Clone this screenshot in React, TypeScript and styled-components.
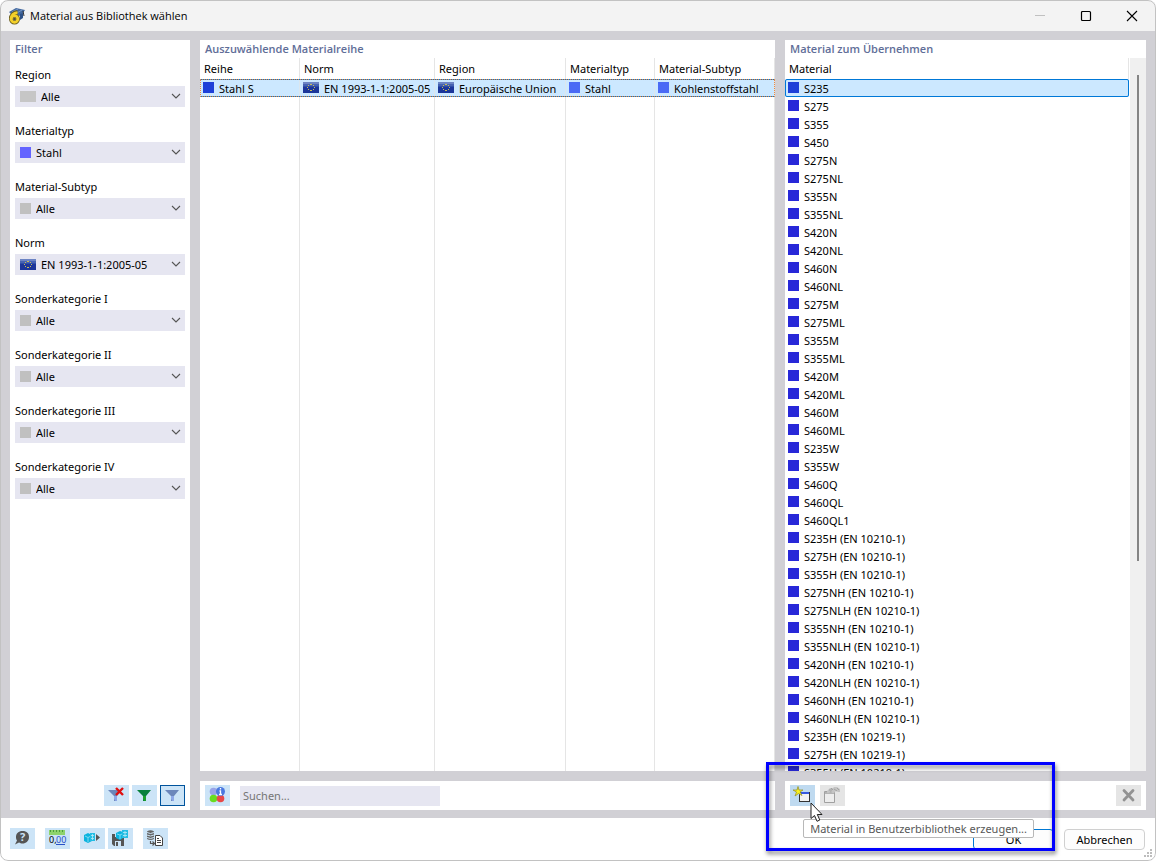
import React from "react";
import styled, { createGlobalStyle, css } from "styled-components";

const GlobalStyle = createGlobalStyle`
  * { box-sizing: border-box; }
  body { margin: 0; background: #fff; }
  body, button, input, select, table {
    font-family: "Noto Sans", "Open Sans", sans-serif;
    font-size: 11px;
    color: #000;
  }
`;

const Dialog = styled.main`
  position: relative;
  display: flex;
  flex-direction: column;
  height: 100vh;
  min-height: 600px;
  overflow: hidden;
  background: #d1d0d5;
  border-radius: 8px;
  &::after {
    content: "";
    position: absolute;
    inset: 0;
    border: 1px solid #c2c2c2;
    border-radius: 8px;
    pointer-events: none;
  }
`;

const TitleBar = styled.header`
  display: flex;
  align-items: center;
  flex: none;
  height: 31px;
  padding: 0 1px 0 8px;
  background: #f3f3f3;
`;

const Title = styled.h1`
  flex: 1;
  margin: 0;
  padding-left: 4px;
  font-family: "Open Sans", sans-serif;
  font-size: 11px;
  font-weight: 400;
`;

const WindowButton = styled.button`
  display: flex;
  align-items: center;
  justify-content: center;
  width: 46px;
  height: 31px;
  padding: 0;
  border: 0;
  background: none;
`;

const Body = styled.div`
  flex: 1;
  min-height: 0;
  display: grid;
  grid-template-columns: 180px minmax(0, 575fr) minmax(0, 361fr);
  grid-template-rows: minmax(0, 1fr);
  gap: 10px;
  padding: 9px 10px 8px;
`;

const Column = styled.section`
  display: flex;
  flex-direction: column;
  gap: 10px;
  min-height: 0;
`;

const Panel = styled.div`
  flex: 1;
  min-height: 0;
  display: flex;
  flex-direction: column;
  background: #fff;
`;

const PanelTitle = styled.h2`
  flex: none;
  height: 18px;
  margin: 0;
  padding-left: 5px;
  font-family: "Open Sans", sans-serif;
  font-size: 11px;
  line-height: 18px;
  font-weight: 600;
  color: #5f6e98;
`;

const Filters = styled.div`
  flex: 1;
  min-height: 0;
  display: flex;
  flex-direction: column;
  gap: 15px;
  padding: 8px 5px;
`;

const Field = styled.div`
  display: flex;
  flex-direction: column;
  gap: 2px;
`;

const FieldLabel = styled.label`
  height: 18px;
  line-height: 18px;
`;

const SelectBox = styled.div`
  position: relative;
  height: 21px;
`;

const Select = styled.select<{ $wide: boolean }>`
  appearance: none;
  display: block;
  width: 100%;
  height: 21px;
  padding: 0 20px 0 ${(p) => (p.$wide ? 26 : 21)}px;
  border: 0;
  border-radius: 0;
  background: #e6e6f1;
`;

const SelectMark = styled.span`
  position: absolute;
  left: 5px;
  top: 5px;
  display: flex;
  pointer-events: none;
`;

const SelectArrow = styled.svg`
  position: absolute;
  right: 4px;
  top: 7px;
  pointer-events: none;
`;

const Swatch = styled.span<{ $color: string; $wide?: boolean }>`
  flex: none;
  width: ${(p) => (p.$wide ? 16 : 11)}px;
  height: 11px;
  background: ${(p) => p.$color};
`;

const Toolbar = styled.div<{ $end?: boolean; $gap?: number }>`
  flex: none;
  display: flex;
  align-items: center;
  justify-content: ${(p) => (p.$end ? "flex-end" : "flex-start")};
  gap: ${(p) => p.$gap ?? 5}px;
  height: 29px;
  padding: 0 5px;
  background: #fff;
`;

const tones = { normal: "#cce4f7", hover: "#bfdaf0", disabled: "#e5e5e5" };

const ToolButton = styled.button<{ $tone?: keyof typeof tones; $active?: boolean; $pushed?: boolean }>`
  flex: none;
  display: block;
  width: 25px;
  height: 21px;
  padding: 0;
  border: 0;
  background: ${(p) => tones[p.$tone ?? "normal"]};
  ${(p) => p.$active && css`box-shadow: inset 0 0 0 1px #00539c;`}
  ${(p) => p.$pushed && css`margin-left: auto;`}
  svg { display: block; }
`;

const Search = styled.input`
  width: 200px;
  height: 20px;
  padding: 0 3px;
  border: 0;
  background: #e6e6f1;
  &::placeholder { color: #757575; opacity: 1; }
`;

const Table = styled.table`
  flex: 1;
  width: 100%;
  height: 100%;
  table-layout: fixed;
  border-collapse: separate;
  border-spacing: 0;
  th, td {
    padding: 0 4px;
    border-right: 1px solid #e5e5e5;
    text-align: left;
    font-weight: 400;
    white-space: nowrap;
  }
  th { height: 21px; }
`;

const TableArea = styled.div`
  flex: 1;
  min-height: 0;
`;

const SelectedRow = styled.tr`
  height: 18px;
  outline: 1px dotted #f0883c;
  outline-offset: -1px;
  td {
    padding: 0 3px;
    border-right: 0;
    background: #cce8ff;
    box-shadow: inset 0 1px #0078d7, inset 0 -1px #0078d7, inset -1px 0 #dbe6ee;
  }
`;

const Cell = styled.span`
  display: flex;
  align-items: flex-start;
  gap: 5px;
  height: 18px;
  padding-top: 3px;
  line-height: 14px;
`;

const ListArea = styled.div`
  flex: 1;
  min-height: 0;
  display: flex;
`;

const ListView = styled.div`
  flex: 1;
  min-width: 0;
  overflow: hidden;
`;

const List = styled(Table)`
  height: auto;
`;

const MaterialRow = styled.tr<{ $selected: boolean }>`
  height: 18px;
  td { padding: 0 3px; border-right: 0; }
  ${(p) => p.$selected && css`
    background: #cce8ff;
    outline: 1px solid #0078d7;
    outline-offset: -1px;
    border-radius: 2px;
  `}
`;

const ScrollTrack = styled.div`
  flex: none;
  width: 17px;
  padding: 17px 7px 0;
  border-left: 1px solid #fff;
  background: #f0f0f0;
`;

const ScrollThumb = styled.div`
  height: 70%;
  max-height: 486px;
  background: #858585;
`;

const Footer = styled.footer`
  flex: none;
  display: flex;
  align-items: flex-start;
  gap: 10px;
  height: 43px;
  padding: 10px 11px 0 10px;
  background: #fff;
`;

const FooterTools = styled.div`
  flex: 1;
  display: flex;
  gap: 10px;
`;

const ToolPair = styled.div`
  display: flex;
  gap: 3px;
`;

const PushButton = styled.button<{ $primary?: boolean }>`
  width: 81px;
  height: 21px;
  margin-top: 1px;
  padding: 0;
  border: 1px solid ${(p) => (p.$primary ? "#0078d4" : "#d0d0d0")};
  border-radius: 4px;
  background: #fdfdfd;
`;

const Grip = styled.svg`
  position: absolute;
  right: 3px;
  bottom: 3px;
`;

const Marker = styled.div`
  position: absolute;
  right: 101px;
  bottom: 10px;
  width: 289px;
  height: 89px;
  border: 3px solid #0000ff;
  filter: drop-shadow(1px 3px 2px rgba(0, 0, 0, 0.5));
  pointer-events: none;
`;

const Tooltip = styled.div`
  position: absolute;
  right: 122px;
  bottom: 23px;
  height: 19px;
  padding: 0 6px;
  border: 1px solid #b8b8b8;
  border-radius: 2px;
  background: #fff;
  color: #575757;
  line-height: 17px;
  white-space: nowrap;
`;

const Pointer = styled.svg`
  position: absolute;
  right: 332px;
  bottom: 38px;
`;

const Flag = () => (
  <svg width="16" height="11" viewBox="0 0 16 11" aria-hidden="true">
    <rect width="16" height="11" fill="#1c369a" />
    <rect width="16" height="2" fill="#6c84c4" />
    <rect y="2" width="16" height="2" fill="#4562b2" />
    <rect y="4" width="16" height="1" fill="#2e4ca6" />
    <path
      d="M7 2H9V3H7ZM5 3H6V4H5ZM10 3H11V4H10ZM4 5H5V6H4ZM11 5H12V6H11ZM5 7H6V8H5ZM10 7H11V8H10ZM7 8H9V9H7Z"
      fill="#c9bd58"
    />
  </svg>
);

const Mark = ({ kind }: { kind: string }) =>
  kind === "flag" ? <Flag /> : <Swatch $color={kind === "wide" ? "#c6c6c6" : kind} $wide={kind === "wide"} />;

const Funnel = ({ top, stem }: { top: string; stem: string }) => (
  <>
    <path d="M4 5H18L13 11V16H10V11Z" transform="translate(1)" fill={top} />
    <path d="M10 11H13V16H11.500L10 14Z" transform="translate(1)" fill={stem} />
  </>
);

const Icon = ({ children }: { children: React.ReactNode }) => (
  <svg width="25" height="21" viewBox="0 0 25 21" aria-hidden="true">{children}</svg>
);

const AppLogo = () => (
  <svg width="18" height="18" viewBox="0 0 18 18" aria-hidden="true">
    <path d="M1 5L8 1L17 3L13 9L4 8Z" fill="#44699f" />
    <path d="M4 5L10 2M7 7L14 3" stroke="#7899c6" />
    <path d="M12 7L15 6V11L12 13Z" fill="#2f5287" />
    <path d="M15 4L16 9" stroke="#333" />
    <path d="M9.500 5Q3 6 3 12" fill="none" stroke="#6b5f22" strokeWidth="4" />
    <circle cx="6.500" cy="12" r="3.500" fill="#f4e9a0" stroke="#6b5f22" strokeWidth="4" />
    <path d="M9.500 5.500Q3.500 6 3 12" fill="none" stroke="#f3d02a" strokeWidth="2.600" />
    <circle cx="6.500" cy="12" r="3.300" fill="none" stroke="#f3d02a" strokeWidth="2.800" />
    <circle cx="6.500" cy="12" r="1.500" fill="#5a5530" />
  </svg>
);

const filters = [
  { id: "region", label: "Region", value: "Alle", mark: "wide" },
  { id: "type", label: "Materialtyp", value: "Stahl", mark: "#6464ff" },
  { id: "subtype", label: "Material-Subtyp", value: "Alle", mark: "#c0c0c0" },
  { id: "norm", label: "Norm", value: "EN 1993-1-1:2005-05", mark: "flag" },
  { id: "cat1", label: "Sonderkategorie I", value: "Alle", mark: "#c0c0c0" },
  { id: "cat2", label: "Sonderkategorie II", value: "Alle", mark: "#c0c0c0" },
  { id: "cat3", label: "Sonderkategorie III", value: "Alle", mark: "#c0c0c0" },
  { id: "cat4", label: "Sonderkategorie IV", value: "Alle", mark: "#c0c0c0" },
];

const series = [
  { head: "Reihe", value: "Stahl S", mark: "#1e40d8", width: 100 },
  { head: "Norm", value: "EN 1993-1-1:2005-05", mark: "flag", width: 135 },
  { head: "Region", value: "Europäische Union", mark: "flag", width: 131 },
  { head: "Materialtyp", value: "Stahl", mark: "#4a6af5", width: 89 },
  { head: "Material-Subtyp", value: "Kohlenstoffstahl", mark: "#4a6af5", width: undefined },
];

const materials = [
  "S235", "S275", "S355", "S450", "S275N", "S275NL", "S355N", "S355NL", "S420N", "S420NL",
  "S460N", "S460NL", "S275M", "S275ML", "S355M", "S355ML", "S420M", "S420ML", "S460M", "S460ML",
  "S235W", "S355W", "S460Q", "S460QL", "S460QL1",
  "S235H (EN 10210-1)", "S275H (EN 10210-1)", "S355H (EN 10210-1)", "S275NH (EN 10210-1)",
  "S275NLH (EN 10210-1)", "S355NH (EN 10210-1)", "S355NLH (EN 10210-1)", "S420NH (EN 10210-1)",
  "S420NLH (EN 10210-1)", "S460NH (EN 10210-1)", "S460NLH (EN 10210-1)",
  "S235H (EN 10219-1)", "S275H (EN 10219-1)", "S355H (EN 10219-1)",
];

export default function App() {
  return (
    <>
      <GlobalStyle />
      <Dialog>
        <TitleBar>
          <AppLogo />
          <Title>Material aus Bibliothek wählen</Title>
          <WindowButton aria-label="Minimieren" disabled>
            <svg width="12" height="12"><path d="M1 5.500H11" stroke="#c0c0c0" /></svg>
          </WindowButton>
          <WindowButton aria-label="Maximieren">
            <svg width="12" height="12"><rect x="1.500" y="1.500" width="9" height="9" rx="1" fill="none" stroke="#000" strokeWidth="1.200" /></svg>
          </WindowButton>
          <WindowButton aria-label="Schließen">
            <svg width="12" height="12"><path d="M1 1L11 11M11 1L1 11" stroke="#000" strokeWidth="1.100" /></svg>
          </WindowButton>
        </TitleBar>

        <Body>
          <Panel>
            <PanelTitle>Filter</PanelTitle>
            <Filters>
              {filters.map((f) => (
                <Field key={f.id}>
                  <FieldLabel htmlFor={f.id}>{f.label}</FieldLabel>
                  <SelectBox>
                    <Select id={f.id} $wide={f.mark === "wide" || f.mark === "flag"}>
                      <option>{f.value}</option>
                    </Select>
                    <SelectMark><Mark kind={f.mark} /></SelectMark>
                    <SelectArrow width="10" height="7">
                      <path d="M1 1L5 5L9 1" fill="none" stroke="#555" strokeWidth="1.100" />
                    </SelectArrow>
                  </SelectBox>
                </Field>
              ))}
            </Filters>
            <Toolbar $end $gap={3}>
              <ToolButton aria-label="Filter löschen">
                <Icon>
                  <g transform="translate(-1)"><Funnel top="#6c87bb" stem="#8ea8e8" /></g>
                  <path d="M12 3L19 10M19 3L12 10" stroke="#e01010" strokeWidth="2.400" />
                </Icon>
              </ToolButton>
              <ToolButton aria-label="Filter anwenden"><Icon><Funnel top="#07803c" stem="#1ba02c" /></Icon></ToolButton>
              <ToolButton aria-label="Filter" $active><Icon><Funnel top="#6c87bb" stem="#8ea8e8" /></Icon></ToolButton>
            </Toolbar>
          </Panel>

          <Column>
            <Panel>
              <PanelTitle>Auszuwählende Materialreihe</PanelTitle>
              <TableArea>
                <Table>
                  <colgroup>{series.map((s) => <col key={s.head} width={s.width} />)}</colgroup>
                  <thead><tr>{series.map((s) => <th key={s.head} scope="col">{s.head}</th>)}</tr></thead>
                  <tbody>
                    <SelectedRow>
                      {series.map((s) => <td key={s.head}><Cell><Mark kind={s.mark} />{s.value}</Cell></td>)}
                    </SelectedRow>
                    <tr aria-hidden="true">{series.map((s) => <td key={s.head} />)}</tr>
                  </tbody>
                </Table>
              </TableArea>
            </Panel>
            <Toolbar $gap={10}>
              <ToolButton aria-label="Materialinformationen">
                <Icon>
                  <circle cx="8.500" cy="6.500" r="3.800" fill="#98a4e8" />
                  <circle cx="8.500" cy="13.500" r="3.800" fill="#68dc20" />
                  <circle cx="15.500" cy="13.500" r="3.800" fill="#e84848" />
                  <circle cx="15.500" cy="6.500" r="4.500" fill="#4a78e0" />
                  <path d="M15.500 3V4.500M14.500 6H15.500V9M14 9.500H17" fill="none" stroke="#fff" strokeWidth="1.300" />
                </Icon>
              </ToolButton>
              <Search type="search" placeholder="Suchen..." aria-label="Suchen" />
            </Toolbar>
          </Column>

          <Column>
            <Panel>
              <PanelTitle>Material zum Übernehmen</PanelTitle>
              <ListArea>
                <ListView>
                  <List>
                    <thead><tr><th scope="col">Material</th></tr></thead>
                    <tbody>
                      {materials.map((m, i) => (
                        <MaterialRow key={m} $selected={i === 0}>
                          <td><Cell><Mark kind={i === 0 ? "#1e40d8" : "#2828d8"} />{m}</Cell></td>
                        </MaterialRow>
                      ))}
                    </tbody>
                  </List>
                </ListView>
                <ScrollTrack><ScrollThumb /></ScrollTrack>
              </ListArea>
            </Panel>
            <Toolbar>
              <ToolButton aria-label="Material in Benutzerbibliothek erzeugen" $tone="hover">
                <Icon>
                  <rect x="9.500" y="7.500" width="10" height="9" fill="#f2f2f2" stroke="#333" />
                  <path d="M11 8H19" stroke="#3558e0" strokeWidth="2" />
                  <path d="M8 1.500L9 5L13 5L10 7L12 10.500L8.500 8.500L5 11L6.500 7L3 5L7 5Z" fill="#f8f020" stroke="#948d20" strokeWidth=".7" />
                </Icon>
              </ToolButton>
              <ToolButton aria-label="Material bearbeiten" $tone="disabled" disabled>
                <Icon>
                  <path d="M4.500 6.500H14.500V17.500H4.500Z" fill="#ededed" stroke="#a0a0a0" />
                  <path d="M5 8H14" stroke="#b4b4b4" strokeWidth="2" />
                  <path d="M7 6L10 3H13L14 2H17L20 4V7H18L16 6L14 8H12L11 6L9 8H7Z" fill="#c4c4c4" />
                  <path d="M9 5H12M14 4L17 6M11 3L13 5M17 3L19 5" stroke="#999" strokeWidth=".8" />
                </Icon>
              </ToolButton>
              <ToolButton aria-label="Löschen" $tone="disabled" $pushed disabled>
                <Icon><path d="M8 5.500L17 15M17 5.500L8 15" stroke="#929292" strokeWidth="2.800" strokeLinecap="round" /></Icon>
              </ToolButton>
            </Toolbar>
          </Column>
        </Body>

        <Footer>
          <FooterTools>
            <ToolButton aria-label="Hilfe">
              <Icon>
                <path d="M12.500 3C17 3 19 5.500 19 9C19 13 16 15.500 12.500 15.500C11 15.500 10 15 9 14.500L5 16.500L7 12.500C6.300 11.500 6 10.500 6 9C6 5.500 8.500 3 12.500 3Z" fill="#555" />
                <text x="12.500" y="13" textAnchor="middle" fontSize="11" fontWeight="700" fill="#cce4f7">?</text>
              </Icon>
            </ToolButton>
            <ToolButton aria-label="Einheiten und Dezimalstellen">
              <Icon>
                <rect x="4" y="2" width="16" height="5" fill="#8ed36c" />
                <path d="M5.500 2V4M8.500 2V4M11.500 2V4M14.500 2V4M17.500 2V4" stroke="#4c9c3c" />
                <text x="4" y="15" fontSize="9">0,</text>
                <text x="11" y="15" fontSize="9" fill="#2850c8">00</text>
                <path d="M11 16.500H20" stroke="#2850c8" />
              </Icon>
            </ToolButton>
            <ToolPair>
              <ToolButton aria-label="Exportieren">
                <Icon>
                  <path d="M4 7L8 5L12 7V13L8 15L4 13Z" fill="#0cb4df" />
                  <path d="M5 8L8 9.500L11 8M8 9.500V14" fill="none" stroke="#9ce2f5" strokeWidth=".8" />
                  <path d="M10 5H15V13H10Z" fill="#23bde4" />
                  <path d="M11 7.500H14M11 10.500H14M12.500 6V12" stroke="#b9eaf7" strokeWidth=".8" />
                  <path d="M16 6L20 9.500L16 13Z" fill="#555" />
                </Icon>
              </ToolButton>
              <ToolButton aria-label="Speichern">
                <Icon>
                  <path d="M4 6H14L16 8V18H6L4 16Z" fill="#555" />
                  <path d="M7 6H11V9H7Z" fill="#cce4f7" />
                  <path d="M7 13H13V18H7Z" fill="#cce4f7" /><path d="M8 14H10V18H8Z" fill="#555" />
                  <path d="M8 5L12 3L15 4V10L12 12L8 10Z" fill="#0cb4df" />
                  <path d="M9 6L12 7L14 6M12 7V11" fill="none" stroke="#9ce2f5" strokeWidth=".8" />
                  <path d="M14 2H20V10H14Z" fill="#23bde4" />
                  <path d="M15 4.500H19M15 7.500H19M17 3V9" stroke="#b9eaf7" strokeWidth=".8" />
                </Icon>
              </ToolButton>
            </ToolPair>
            <ToolButton aria-label="Datenbank">
              <Icon>
                <path d="M4 3.500Q7.500 1 11 3.500V11Q7.500 13 4 11Z" fill="#666" />
                <path d="M4 4.500Q7.500 6.500 11 4.500M4 7Q7.500 9 11 7M4 9.500Q7.500 11.500 11 9.500" fill="none" stroke="#cce4f7" />
                <path d="M7.500 13V15.500H11M9.500 13.500L11.500 15.500L9.500 17.500" fill="none" stroke="#555" strokeWidth="1.200" />
                <path d="M12.500 7.500H17L19.500 10V17.500H12.500Z" fill="#fff" stroke="#444" />
                <path d="M14 10.500H16M14 12.500H18M14 14.500H18" stroke="#444" />
              </Icon>
            </ToolButton>
          </FooterTools>
          <PushButton $primary>OK</PushButton>
          <PushButton>Abbrechen</PushButton>
        </Footer>

        <Grip width="9" height="9" fill="#bdbdbd" aria-hidden="true">
          <path d="M6 0H8V2H6ZM3 3H5V5H3ZM6 3H8V5H6ZM0 6H2V8H0ZM3 6H5V8H3ZM6 6H8V8H6Z" />
        </Grip>
        <Marker />
        <Tooltip role="tooltip">Material in Benutzerbibliothek erzeugen...</Tooltip>
        <Pointer width="14" height="21" viewBox="0 0 14 21" aria-hidden="true">
          <path d="M1 1V16.500L4.500 13.500L7 19.300L9.800 18L7.300 12.500H12Z" fill="#fff" stroke="#222" strokeWidth="1" />
        </Pointer>
      </Dialog>
    </>
  );
}
